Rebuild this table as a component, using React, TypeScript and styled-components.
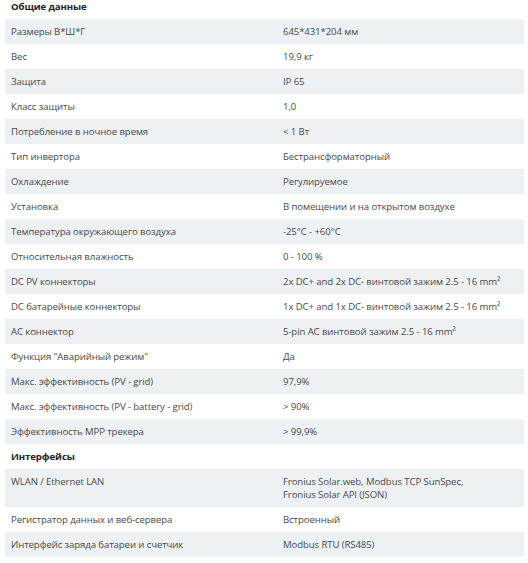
import React from "react";
import styled, { createGlobalStyle } from "styled-components";

const Global = createGlobalStyle`
  html, body { margin: 0; padding: 0; background: #fff; }
  body { font-family: "Open Sans", "Noto Sans", sans-serif; overflow: hidden; }
`;

const Wrapper = styled.div`
  padding: 0 4px 0 5px;
  margin-top: -6px;
`;

const Row = styled.div<{ $shaded?: boolean }>`
  display: grid;
  grid-template-columns: 272px 1fr;
  background: ${(p) => (p.$shaded ? "#edf1f4" : "#fff")};
`;

const Cell = styled.div`
  padding: 6px 6px;
  font-size: 9.6px;
  line-height: 13px;
  color: #4a4a4a;
  letter-spacing: -0.1px;
`;

const Heading = styled.div`
  padding: 6px 6px;
  font-size: 9.6px;
  line-height: 13px;
  font-weight: 700;
  color: #222;
  letter-spacing: -0.1px;
`;

type Item = [string, React.ReactNode];

const general: Item[] = [
  ["Размеры В*Ш*Г", "645*431*204 мм"],
  ["Вес", "19,9 кг"],
  ["Защита", "IP 65"],
  ["Класс защиты", "1,0"],
  ["Потребление в ночное время", "< 1 Вт"],
  ["Тип инвертора", "Бестрансформаторный"],
  ["Охлаждение", "Регулируемое"],
  ["Установка", "В помещении и на открытом воздухе"],
  ["Температура окружающего воздуха", "-25°C - +60°C"],
  ["Относительная влажность", "0 - 100 %"],
  ["DC PV коннекторы", "2x DC+ and 2x DC- винтовой зажим 2.5 - 16 mm²"],
  ["DC батарейные коннекторы", "1x DC+ and 1x DC- винтовой зажим 2.5 - 16 mm²"],
  ["AC коннектор", "5-pin AC винтовой зажим 2.5 - 16 mm²"],
  ["Функция \"Аварийный режим\"", "Да"],
  ["Макс. эффективность (PV - grid)", "97,9%"],
  ["Макс. эффективность (PV - battery - grid)", "> 90%"],
  ["Эффективность MPP трекера", "> 99,9%"],
];

const interfaces: Item[] = [
  [
    "WLAN / Ethernet LAN",
    <>
      Fronius Solar.web, Modbus TCP SunSpec,
      <br />
      Fronius Solar API (JSON)
    </>,
  ],
  ["Регистратор данных и веб-сервера", "Встроенный"],
  ["Интерфейс заряда батареи и счетчик", "Modbus RTU (RS485)"],
];

const Section: React.FC<{ title: string; items: Item[] }> = ({ title, items }) => (
  <>
    <Row>
      <Heading>{title}</Heading>
      <Cell />
    </Row>
    {items.map(([k, v], i) => (
      <Row key={k} $shaded={i % 2 === 0}>
        <Cell>{k}</Cell>
        <Cell>{v}</Cell>
      </Row>
    ))}
  </>
);

export default function App() {
  return (
    <>
      <Global />
      <Wrapper>
        <Section title="Общие данные" items={general} />
        <Section title="Интерфейсы" items={interfaces} />
      </Wrapper>
    </>
  );
}
